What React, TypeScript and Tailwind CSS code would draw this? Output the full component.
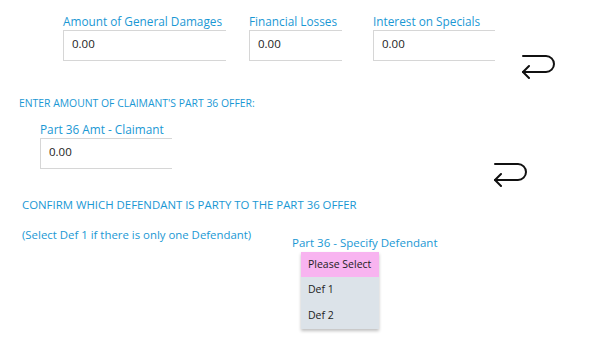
const FONT = "font-['Open_Sans','Noto_Sans',sans-serif]";

function ReturnIcon() {
  return (
    <svg width="36" height="26" viewBox="0 0 36 26" fill="none" stroke="#111" strokeWidth="2" strokeLinecap="round" strokeLinejoin="round">
      <path d="M2 3 H25 a8 8 0 0 1 0 16 H2" />
      <path d="M8 13 L2 19 L8 25" />
    </svg>
  );
}

function AmountField({ label, width }: { label: string; width: string }) {
  return (
    <div className={`flex flex-col ${width}`}>
      <span className="text-[11.8px] leading-[16px] text-[#1a98d4] whitespace-nowrap">{label}</span>
      <div className="mt-[1px] h-[31px] border-l border-t border-b border-[#d6d6d6] pl-[8px] pt-[5px] text-[11.5px] leading-[16px] text-[#222]">
        0.00
      </div>
    </div>
  );
}

export default function App() {
  return (
    <div className={`w-[598px] h-[347px] bg-white ${FONT} overflow-hidden`}>
      {/* General damages row */}
      <div className="flex pl-[63px] pt-[13px]">
        <AmountField label="Amount of General Damages" width="w-[163px]" />
        <div className="ml-[23px]">
          <AmountField label="Financial Losses" width="w-[93px]" />
        </div>
        <div className="ml-[31px]">
          <AmountField label="Interest on Specials" width="w-[122px]" />
        </div>
        <div className="ml-[26px] mt-[40px]">
          <ReturnIcon />
        </div>
      </div>

      {/* Claimant's part 36 */}
      <div className="pl-[19px] mt-[17px] text-[10.4px] leading-[14px] text-[#1a98d4] whitespace-nowrap">
        ENTER AMOUNT OF CLAIMANT'S PART 36 OFFER:
      </div>
      <div className="flex pl-[40px] mt-[11px]">
        <AmountField label="Part 36 Amt - Claimant" width="w-[132px]" />
        <div className="ml-[321px] mt-[40px]">
          <ReturnIcon />
        </div>
      </div>

      {/* Defendant */}
      <div className="pl-[22px] mt-[10px] text-[11.4px] leading-[16px] text-[#1a98d4] whitespace-nowrap">
        CONFIRM WHICH DEFENDANT IS PARTY TO THE PART 36 OFFER
      </div>
      <div className="flex mt-[14px]">
        <div className="pl-[22px] w-[292px] text-[11.4px] leading-[16px] text-[#1a98d4] whitespace-nowrap">
          (Select Def 1 if there is only one Defendant)
        </div>
        <div className="flex flex-col mt-[8px]">
          <span className="text-[11.5px] leading-[16px] text-[#1a98d4] whitespace-nowrap">Part 36 - Specify Defendant</span>
          <div className="ml-[9px] mt-[1px] w-[78px] flex flex-col text-[10.5px] text-[#222] shadow-[0_2px_3px_rgba(0,0,0,0.25)]">
            <div className="h-[25px] bg-[#f8b4f0] pl-[7px] flex items-center">Please Select</div>
            <div className="h-[25px] bg-[#dce3e9] pl-[7px] flex items-center">Def 1</div>
            <div className="h-[27px] bg-[#dce3e9] pl-[7px] flex items-center">Def 2</div>
          </div>
        </div>
      </div>
    </div>
  );
}
